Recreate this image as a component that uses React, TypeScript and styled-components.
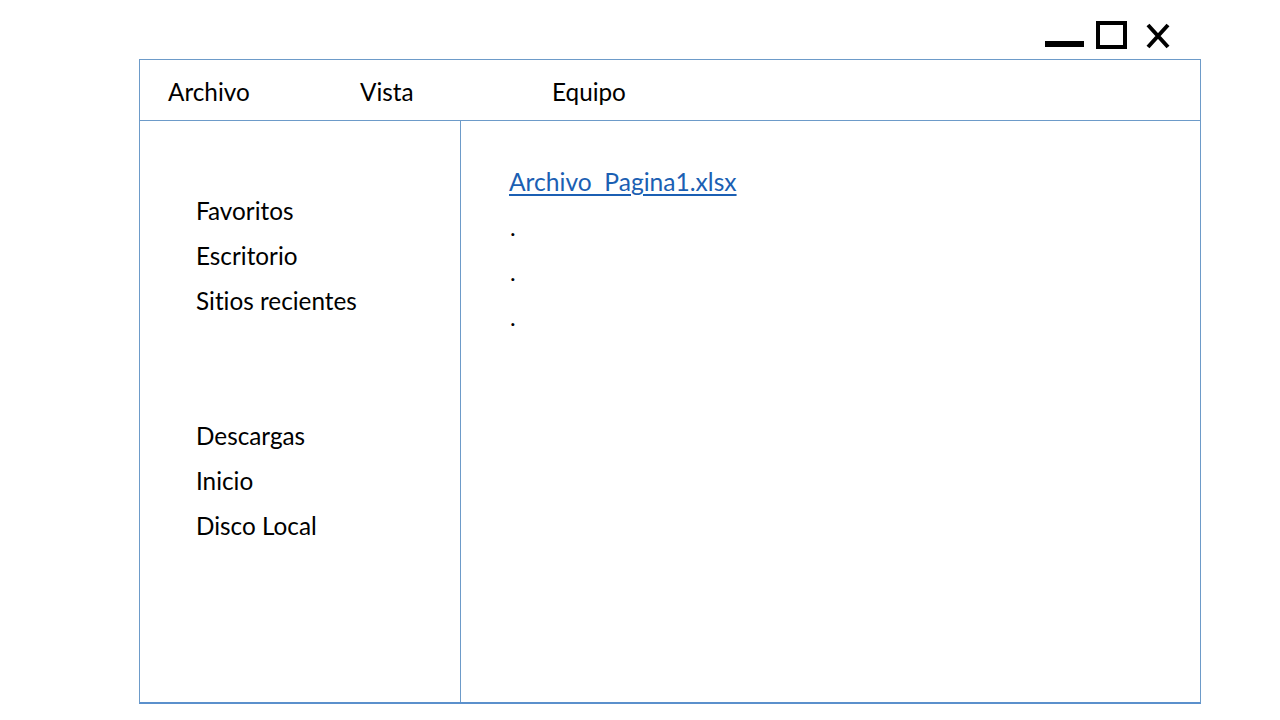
import React from "react";
import styled, { createGlobalStyle } from "styled-components";

const Global = createGlobalStyle`
  html, body { margin: 0; padding: 0; background: #ffffff; }
  body {
    font-family: Lato, "Open Sans", sans-serif;
    color: #000;
    font-variant-ligatures: none;
    font-feature-settings: "liga" 0, "clig" 0, "dlig" 0, "calt" 0;
  }
`;

const Page = styled.div`
  width: 1280px;
  height: 720px;
  display: flex;
  flex-direction: column;
  overflow: hidden;
`;

const TitleBar = styled.div`
  height: 59px;
  box-sizing: border-box;
  display: flex;
  justify-content: flex-end;
  align-items: flex-start;
  padding: 21px 110px 0 0;
`;

const Controls = styled.div`
  display: flex;
  align-items: flex-start;
`;

const CtrlIcon = styled.svg<{ $gap?: number }>`
  display: block;
  flex: none;
  margin-left: ${(p) => p.$gap ?? 0}px;
`;

const Window = styled.div`
  margin-left: 139px;
  width: 1062px;
  height: 645px;
  box-sizing: border-box;
  border: 1px solid #6d9bc9;
  border-bottom: 2px solid #5b90cc;
  display: flex;
  flex-direction: column;
`;

const MenuBar = styled.div`
  height: 61px;
  box-sizing: border-box;
  border-bottom: 1px solid #6d9bc9;
  display: flex;
  align-items: center;
  padding-left: 28px;
`;

const MenuItem = styled.div`
  width: 192px;
  font-size: 24.3px;
  line-height: 1;
  padding-top: 4px;
`;

const Body = styled.div`
  flex: 1;
  display: flex;
`;

const Sidebar = styled.div`
  width: 321px;
  border-right: 1px solid #6d9bc9;
  padding: 67px 0 0 56px;
  box-sizing: border-box;
  display: flex;
  flex-direction: column;
  gap: 90px;
`;

const NavGroup = styled.ul`
  list-style: none;
  margin: 0;
  padding: 0;
`;

const NavItem = styled.li`
  font-size: 24.3px;
  line-height: 45px;
  height: 45px;
  white-space: nowrap;
`;

const Content = styled.div`
  flex: 1;
  padding: 38px 0 0 48px;
`;

const FileLink = styled.a`
  display: block;
  font-size: 24.6px;
  line-height: 45px;
  color: #1b5fb3;
  text-decoration: underline;
  text-decoration-thickness: 2px;
  text-underline-offset: 3px;
  white-space: pre;
`;

const Dot = styled.div`
  font-size: 24px;
  line-height: 45px;
  height: 45px;
  padding-left: 1px;
`;

export default function App() {
  return (
    <>
      <Global />
      <Page>
        <TitleBar>
          <Controls>
            <CtrlIcon width="39" height="28" viewBox="0 0 39 28">
              <rect x="0" y="20" width="39" height="6" fill="#000" />
            </CtrlIcon>
            <CtrlIcon $gap={12} width="31" height="28" viewBox="0 0 31 28">
              <rect x="2" y="2" width="27" height="24" fill="none" stroke="#000" strokeWidth="4" />
            </CtrlIcon>
            <CtrlIcon $gap={19} width="24" height="28" viewBox="0 0 24 28">
              <path d="M2 4 L22 26 M22 4 L2 26" stroke="#000" strokeWidth="4" fill="none" />
            </CtrlIcon>
          </Controls>
        </TitleBar>
        <Window>
          <MenuBar>
            <MenuItem>Archivo</MenuItem>
            <MenuItem>Vista</MenuItem>
            <MenuItem>Equipo</MenuItem>
          </MenuBar>
          <Body>
            <Sidebar>
              <NavGroup>
                <NavItem>Favoritos</NavItem>
                <NavItem>Escritorio</NavItem>
                <NavItem>Sitios recientes</NavItem>
              </NavGroup>
              <NavGroup>
                <NavItem>Descargas</NavItem>
                <NavItem>Inicio</NavItem>
                <NavItem>Disco Local</NavItem>
              </NavGroup>
            </Sidebar>
            <Content>
              <FileLink href="#">Archivo  Pagina1.xlsx</FileLink>
              <Dot>.</Dot>
              <Dot>.</Dot>
              <Dot>.</Dot>
            </Content>
          </Body>
        </Window>
      </Page>
    </>
  );
}
